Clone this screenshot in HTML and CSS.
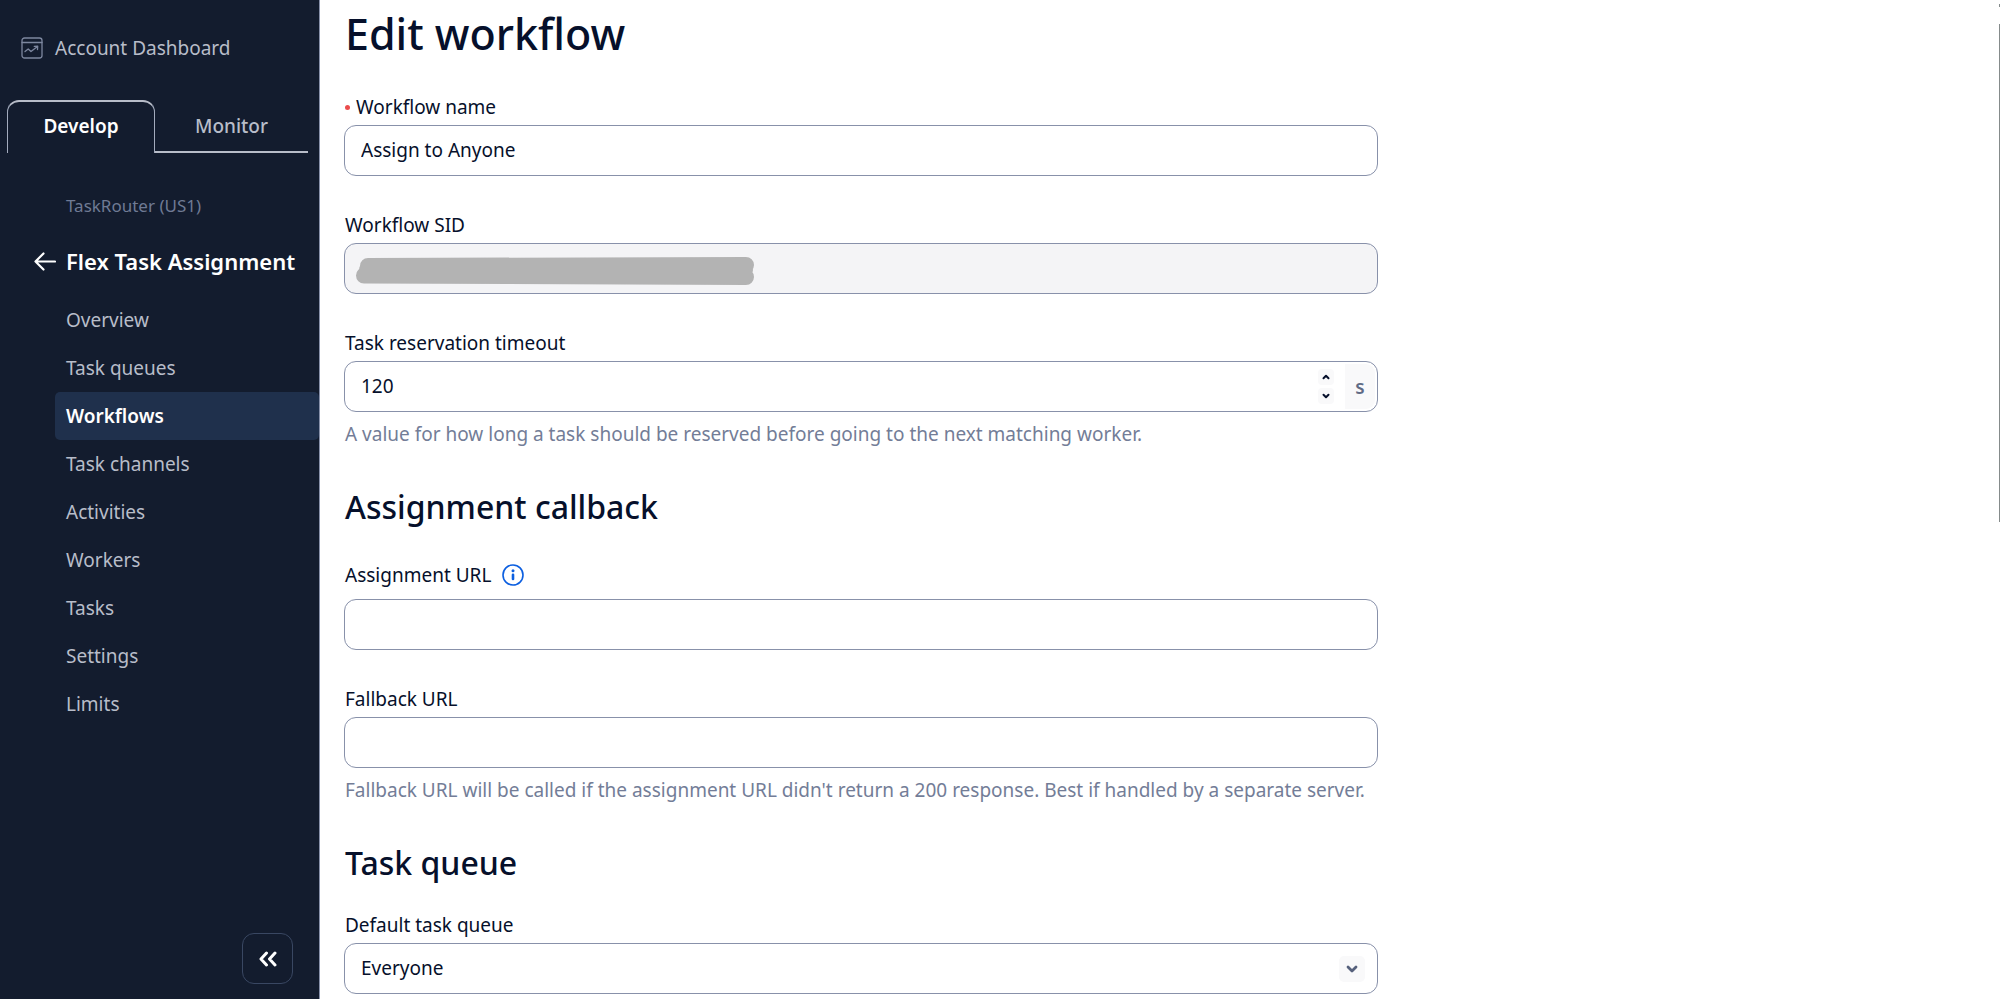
FILE: index.html
```html
<!DOCTYPE html>
<html lang="en">

<head>
    <meta charset="UTF-8">
    <meta name="viewport" content="width=device-width, initial-scale=1.0">
    <title>Edit workflow</title>
    <link rel="stylesheet" href="styles.css">
</head>

<body>
    <aside class="sidebar">
        <a class="dashboard-link" href="#">
            <svg class="dashboard-icon" viewBox="0 0 22 22" fill="none" stroke="currentColor" stroke-width="1.3" stroke-linecap="round" stroke-linejoin="round">
                <rect x="1" y="1" width="20" height="20" rx="2.5" />
                <path d="M1 5.5h20M4 14.5l3.2-2.6 2.8 2.6 6.5-5M13.2 9.3l3.5-.2-.2 3.4" />
            </svg>
            Account Dashboard
        </a>

        <div class="tabs">
            <button class="tab tab-active" type="button">Develop</button>
            <button class="tab" type="button">Monitor</button>
        </div>

        <nav class="nav">
            <p class="nav-product">TaskRouter (US1)</p>
            <a class="nav-back" href="#">
                <svg class="back-icon" viewBox="0 0 22 20" fill="none" stroke="currentColor" stroke-width="2.2" stroke-linecap="round" stroke-linejoin="round">
                    <path d="M21 10.500H1.500M9.500 2.500L1.500 10.500l8 8" />
                </svg>
                Flex Task Assignment
            </a>
            <ul class="nav-list">
                <li><a class="nav-item" href="#">Overview</a></li>
                <li><a class="nav-item" href="#">Task queues</a></li>
                <li><a class="nav-item nav-item-active" href="#">Workflows</a></li>
                <li><a class="nav-item" href="#">Task channels</a></li>
                <li><a class="nav-item" href="#">Activities</a></li>
                <li><a class="nav-item" href="#">Workers</a></li>
                <li><a class="nav-item" href="#">Tasks</a></li>
                <li><a class="nav-item" href="#">Settings</a></li>
                <li><a class="nav-item" href="#">Limits</a></li>
            </ul>
        </nav>

        <button class="collapse" type="button" aria-label="Collapse navigation">
            <svg width="18" height="16" viewBox="0 0 18 16" fill="none" stroke="currentColor" stroke-width="3" stroke-linecap="round" stroke-linejoin="round">
                <path d="M7.500 2L2 8l5.500 6M16 2l-5.500 6 5.500 6" />
            </svg>
        </button>
    </aside>

    <main class="content">
        <form class="form">
            <h1>Edit workflow</h1>

            <div class="field">
                <label class="label" for="name"><span class="required"></span>Workflow name</label>
                <div class="control">
                    <input type="text" id="name" value="Assign to Anyone" required>
                </div>
            </div>

            <div class="field">
                <label class="label" for="sid">Workflow SID</label>
                <div class="control control-readonly">
                    <input type="text" id="sid" readonly>
                    <svg class="redacted" viewBox="0 0 400 30" fill="none" stroke="#b3b3b3" stroke-linecap="round" stroke-linejoin="round">
                        <path stroke-width="16" d="M13 10L391 9M9 19.500L391 21M12 14h378" />
                    </svg>
                </div>
            </div>

            <div class="field">
                <label class="label" for="timeout">Task reservation timeout</label>
                <div class="control">
                    <input type="number" id="timeout" value="120">
                    <div class="stepper">
                        <button type="button" aria-label="Increase">
                            <svg width="8" height="6" viewBox="0 0 8 6" fill="none" stroke="currentColor" stroke-width="2" stroke-linecap="round" stroke-linejoin="round"><path d="M1.500 4.200L4 1.800l2.500 2.400" /></svg>
                        </button>
                        <button type="button" aria-label="Decrease">
                            <svg width="8" height="6" viewBox="0 0 8 6" fill="none" stroke="currentColor" stroke-width="2" stroke-linecap="round" stroke-linejoin="round"><path d="M1.500 1.800L4 4.200l2.500-2.400" /></svg>
                        </button>
                    </div>
                    <span class="suffix">s</span>
                </div>
                <p class="help">A value for how long a task should be reserved before going to the next matching worker.</p>
            </div>

            <h2>Assignment callback</h2>

            <div class="field">
                <div class="label-row">
                    <label class="label" for="assignment-url">Assignment URL</label>
                    <button class="info" type="button" aria-label="More information">
                        <svg width="22" height="22" viewBox="0 0 22 22" fill="none" stroke="currentColor">
                            <circle cx="11" cy="11" r="10" stroke-width="1.600" />
                            <path stroke-width="2.600" stroke-linecap="round" d="M11 10.800v4.200" />
                            <circle cx="11" cy="6.800" r="1.500" fill="currentColor" stroke="none" />
                        </svg>
                    </button>
                </div>
                <div class="control">
                    <input type="text" id="assignment-url">
                </div>
            </div>

            <div class="field">
                <label class="label" for="fallback-url">Fallback URL</label>
                <div class="control">
                    <input type="text" id="fallback-url">
                </div>
                <p class="help">Fallback URL will be called if the assignment URL didn't return a 200 response. Best if handled by a separate server.</p>
            </div>

            <h2>Task queue</h2>

            <div class="field">
                <label class="label" for="queue">Default task queue</label>
                <div class="control">
                    <select id="queue">
                        <option>Everyone</option>
                    </select>
                    <span class="select-arrow">
                        <svg width="12" height="8" viewBox="0 0 12 8" fill="none" stroke="currentColor" stroke-width="2.800" stroke-linecap="round" stroke-linejoin="round"><path d="M2 2l4 4 4-4" /></svg>
                    </span>
                </div>
            </div>
        </form>
    </main>

    <div class="scrollbar">
        <div class="scroll-up"></div>
        <div class="scroll-thumb"></div>
    </div>
</body>

</html>
```

FILE: styles.css
```css
* {
    box-sizing: border-box;
}

body {
    margin: 0;
    display: flex;
    height: 100vh;
    overflow: hidden;
    font-family: "Noto Sans", sans-serif;
    font-size: 19px;
    line-height: 26px;
    color: #06102b;
    background: #fff;
}

button,
input,
select {
    font: inherit;
    color: inherit;
}

button {
    padding: 0;
    border: none;
    background: none;
    cursor: pointer;
}

a {
    color: inherit;
    text-decoration: none;
}

svg {
    display: block;
    flex: none;
}

/* Sidebar */

.sidebar {
    flex: none;
    display: flex;
    flex-direction: column;
    width: 320px;
    background: #131c2e;
    border-right: 1px solid #8891aa;
    color: #b8bdc9;
}

.dashboard-link {
    display: flex;
    align-items: center;
    gap: 12px;
    padding: 35px 20px 0 21px;
}

.dashboard-icon {
    width: 22px;
    height: 22px;
    color: #7d879f;
}

.tabs {
    display: flex;
    margin: 39px 11px 0 7px;
}

.tab {
    flex: 1;
    height: 53px;
    border-bottom: 2px solid #b8bdc9;
    font-weight: 500;
}

.tab-active {
    flex: 0 0 148px;
    padding-bottom: 3px;
    border: 1px solid #a3abbd;
    border-top: 2px solid #b8bdc9;
    border-bottom: none;
    border-radius: 12px 12px 0 0;
    color: #fff;
    font-weight: 600;
}

.nav-product {
    margin: 40px 0 0 66px;
    font-size: 17px;
    color: #6f7a94;
}

.nav-back {
    display: flex;
    align-items: center;
    gap: 10px;
    margin: 29px 0 22px 34px;
    font-size: 22px;
    font-weight: 600;
    color: #fff;
    white-space: nowrap;
}

.back-icon {
    width: 22px;
    height: 20px;
}

.nav-list {
    margin: 0 0 0 55px;
    padding: 0;
    list-style: none;
}

.nav-item {
    display: block;
    padding: 11px;
    border-radius: 5px;
}

.nav-item-active {
    background: #1f304c;
    color: #fff;
    font-weight: 600;
}

.collapse {
    display: flex;
    align-items: center;
    justify-content: center;
    width: 51px;
    height: 51px;
    margin: auto 26px 15px auto;
    border: 1px solid #394762;
    border-radius: 12px;
    color: #fff;
}

/* Form */

.content {
    flex: 1;
    padding: 6px 24px 0;
}

.form {
    max-width: 1034px;
}

h1,
h2 {
    margin: 0;
    padding-left: 1px;
    font-weight: 500;
}

h1 {
    margin-bottom: 32px;
    font-size: 43px;
    line-height: 56px;
}

h2 {
    margin: 40px 0 29px;
    font-size: 32px;
    line-height: 40px;
}

.field + .field {
    margin-top: 36px;
}

.label {
    display: flex;
    align-items: center;
    margin-bottom: 5px;
    padding-left: 1px;
}

.label-row {
    display: flex;
    align-items: center;
    gap: 11px;
    height: 38px;
    margin-bottom: 5px;
}

.label-row .label {
    margin: 0;
}

.required {
    width: 5px;
    height: 5px;
    margin-right: 6px;
    border-radius: 50%;
    background: #eb4c4c;
}

.info {
    color: #0c5fe0;
}

.control {
    position: relative;
    display: flex;
    align-items: center;
    height: 51px;
    padding: 2px;
    border: 1px solid #8891aa;
    border-radius: 12px;
    background: #fff;
}

.control-readonly {
    background: #f4f4f6;
}

.control input,
.control select {
    flex: 1;
    min-width: 0;
    height: 100%;
    padding: 0 14px 2px;
    border: none;
    border-radius: 9px;
    outline: none;
    background: none;
    appearance: none;
}

.control input[type="number"] {
    appearance: textfield;
}

/* Grey marker strokes over the hidden SID */
.redacted {
    position: absolute;
    left: 10px;
    top: 12px;
    width: 400px;
    height: 30px;
}

.stepper {
    display: flex;
    flex-direction: column;
    gap: 3px;
    margin-right: 11px;
}

.stepper button {
    display: flex;
    align-items: center;
    justify-content: center;
    width: 16px;
    height: 16px;
    border-radius: 4px;
    background: #f9f9fa;
}

.suffix {
    display: flex;
    align-items: center;
    justify-content: center;
    width: 30px;
    height: 100%;
    border-radius: 0 9px 9px 0;
    background: #f9f9fa;
    color: #606b85;
    font-weight: 600;
}

.select-arrow {
    position: absolute;
    right: 12px;
    display: flex;
    align-items: center;
    justify-content: center;
    width: 26px;
    height: 26px;
    border-radius: 5px;
    background: #f9f9fa;
    color: #56617c;
    pointer-events: none;
}

.help {
    margin: 9px 0 0;
    padding-left: 1px;
    color: #737d97;
}

/* Thin page scrollbar at the window edge */
.scrollbar {
    position: fixed;
    top: 4px;
    right: 0;
    width: 1px;
}

.scroll-up {
    height: 3px;
    background: #858b8b;
}

.scroll-thumb {
    height: 498px;
    margin-top: 17px;
    background: #858b8b;
}
```
